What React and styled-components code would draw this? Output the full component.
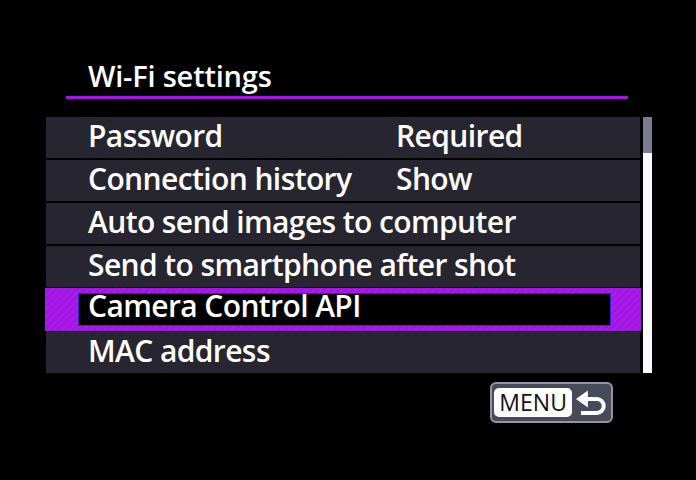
import React from 'react'
import styled, { createGlobalStyle } from 'styled-components'

const GlobalStyle = createGlobalStyle`
    html, body {
        margin: 0;
        background: #000;
    }
    body {
        font-family: "Open Sans", "Liberation Sans", sans-serif;
    }
`;

const items = [
    { label: 'Password', value: 'Required' },
    { label: 'Connection history', value: 'Show' },
    { label: 'Auto send images to computer' },
    { label: 'Send to smartphone after shot' },
    { label: 'Camera Control API', selected: true },
    { label: 'MAC address' },
]

const ReturnArrow = () => (
    <svg width="32" height="28" viewBox="0 0 32 28">
        <path d="M1 10 L13 1.5 L13 18.5 Z" fill="#fff" />
        <path d="M11 10 H22 A7 7 0 0 1 22 24 H6" fill="none" stroke="#fff" strokeWidth="4" />
    </svg>
)

const App = () => {
    return (
        <SScreen>
            <GlobalStyle />
            <STitle>Wi-Fi settings</STitle>
            <SListArea>
                <SList>
                    {items.map((item) =>
                        item.selected ? (
                            <SSelectedRow key={item.label}>
                                <SSelectedBox>
                                    <SLabel>{item.label}</SLabel>
                                </SSelectedBox>
                            </SSelectedRow>
                        ) : (
                            <SRow key={item.label}>
                                <SLabel>{item.label}</SLabel>
                                {item.value && <SValue>{item.value}</SValue>}
                            </SRow>
                        )
                    )}
                </SList>
                <SScrollBar>
                    <SScrollTop />
                </SScrollBar>
            </SListArea>
            <SFooter>
                <SMenuButton>
                    <SMenuLabel>MENU</SMenuLabel>
                    <ReturnArrow />
                </SMenuButton>
            </SFooter>
        </SScreen>
    )
}

export default App

const SScreen = styled.div`
    width: 696px;
    height: 480px;
    box-sizing: border-box;
    padding: 58px 0 0 46px;
    background: #000;
    display: flex;
    flex-direction: column;
    overflow: hidden;
`;

const STitle = styled.h1`
    margin: 0 0 0 20px;
    width: 562px;
    padding: 0 0 2px 22px;
    box-sizing: border-box;
    border-bottom: 3px solid #a414e4;
    color: #fff;
    font-size: 29px;
    line-height: 36px;
    font-weight: 600;
    letter-spacing: -0.2px;
`;

const SListArea = styled.div`
    display: flex;
    margin-top: 18px;
`;

const SList = styled.div`
    width: 594px;
    display: flex;
    flex-direction: column;
    gap: 2px;
`;

const SRow = styled.div`
    height: 41px;
    display: flex;
    align-items: flex-start;
    padding-left: 42px;
    background: #27252f;
    line-height: 37px;
`;

const SSelectedRow = styled.div`
    height: 41px;
    box-sizing: border-box;
    padding: 4px 29px 4px 32px;
    box-shadow: 0 0 0 1px #a414e4;
    background: repeating-linear-gradient(
        -45deg,
        #a414e4 0px,
        #a414e4 3px,
        #a91fe8 3px,
        #a91fe8 5px
    );
`;

const SSelectedBox = styled.div`
    height: 100%;
    box-sizing: border-box;
    display: flex;
    align-items: flex-start;
    padding-left: 9px;
    background: #000;
    border: 1px solid #3428c8;
    line-height: 23px;
`;

const SLabel = styled.span`
    width: 308px;
    flex-shrink: 0;
    white-space: nowrap;
    color: #fff;
    font-size: 30px;
    font-weight: 600;
    letter-spacing: -0.6px;
`;

const SValue = styled.span`
    color: #fff;
    font-size: 30px;
    font-weight: 600;
    letter-spacing: -0.6px;
`;

const SScrollBar = styled.div`
    width: 9px;
    margin-left: 3px;
    background: #fbfbff;
    display: flex;
    flex-direction: column;
`;

const SScrollTop = styled.div`
    height: 36px;
    background: #7a7c92;
`;

const SFooter = styled.div`
    width: 605px;
    display: flex;
    justify-content: flex-end;
    padding-right: 38px;
    box-sizing: border-box;
    margin-top: 9px;
`;

const SMenuButton = styled.div`
    width: 123px;
    height: 41px;
    box-sizing: border-box;
    border: 2px solid #9294a8;
    border-radius: 6px;
    background: #474a59;
    display: flex;
    align-items: center;
    gap: 3px;
    padding: 0 4px 0 2px;
`;

const SMenuLabel = styled.div`
    width: 79px;
    height: 29px;
    border-radius: 5px;
    background: #fff;
    color: #111;
    font-size: 23px;
    line-height: 29px;
    text-align: center;
    font-weight: 400;
`;
